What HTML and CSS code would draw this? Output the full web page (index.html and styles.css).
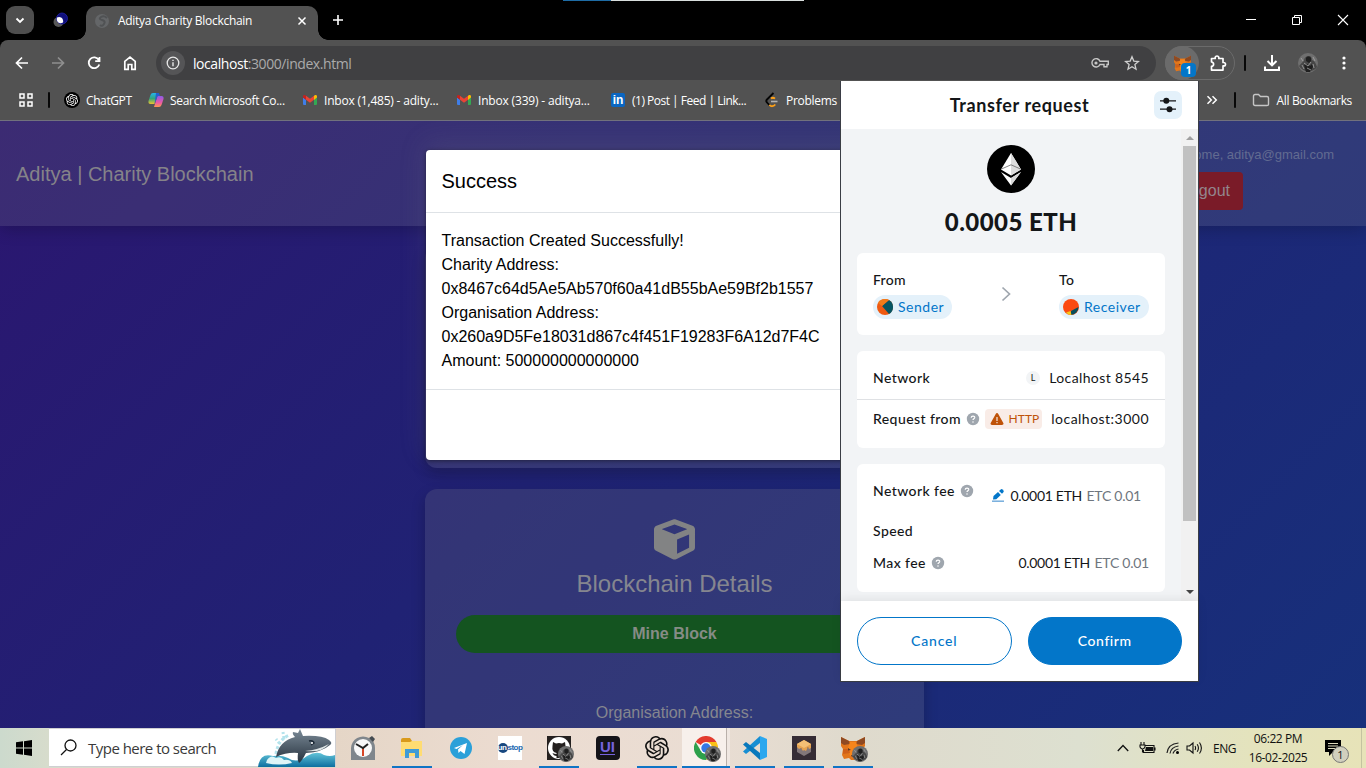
FILE: index.html
```html
<!DOCTYPE html>
<html lang="en">
<head>
<meta charset="utf-8">
<title>Aditya Charity Blockchain</title>
<link rel="stylesheet" href="styles.css">
</head>
<body>
<svg class="defs" width="0" height="0">
  <defs>
    <symbol id="openai" viewBox="0 0 24 24"><path fill="currentColor" d="M22.2819 9.8211a5.9847 5.9847 0 0 0-.5157-4.9108 6.0462 6.0462 0 0 0-6.5098-2.9A6.0651 6.0651 0 0 0 4.9807 4.1818a5.9847 5.9847 0 0 0-3.9977 2.9 6.0462 6.0462 0 0 0 .7427 7.0966 5.98 5.98 0 0 0 .511 4.9107 6.051 6.051 0 0 0 6.5146 2.9001A5.9847 5.9847 0 0 0 13.2599 24a6.0557 6.0557 0 0 0 5.7718-4.2058 5.9894 5.9894 0 0 0 3.9977-2.9001 6.0557 6.0557 0 0 0-.7475-7.0729zm-9.022 12.6081a4.4755 4.4755 0 0 1-2.8764-1.0408l.1419-.0804 4.7783-2.7582a.7948.7948 0 0 0 .3927-.6813v-6.7369l2.02 1.1686a.071.071 0 0 1 .038.052v5.5826a4.504 4.504 0 0 1-4.4945 4.4944zm-9.6607-4.1254a4.4708 4.4708 0 0 1-.5346-3.0137l.142.0852 4.783 2.7582a.7712.7712 0 0 0 .7806 0l5.8428-3.3685v2.3324a.0804.0804 0 0 1-.0332.0615L9.74 19.9502a4.4992 4.4992 0 0 1-6.1408-1.6464zM2.3408 7.8956a4.485 4.485 0 0 1 2.3655-1.9728V11.6a.7664.7664 0 0 0 .3879.6765l5.8144 3.3543-2.0201 1.1685a.0757.0757 0 0 1-.071 0l-4.8303-2.7865A4.504 4.504 0 0 1 2.3408 7.872zm16.5963 3.8558L13.1038 8.364 15.1192 7.2a.0757.0757 0 0 1 .071 0l4.8303 2.7913a4.4944 4.4944 0 0 1-.6765 8.1042v-5.6772a.79.79 0 0 0-.407-.667zm2.0107-3.0231l-.142-.0852-4.7735-2.7818a.7759.7759 0 0 0-.7854 0L9.409 9.2297V6.8974a.0662.0662 0 0 1 .0284-.0615l4.8303-2.7866a4.4992 4.4992 0 0 1 6.6802 4.66zM8.3065 12.863l-2.02-1.1638a.0804.0804 0 0 1-.038-.0567V6.0742a4.4992 4.4992 0 0 1 7.3757-3.4537l-.142.0805L8.704 5.459a.7948.7948 0 0 0-.3927.6813zm1.0976-2.3654l2.602-1.4998 2.6069 1.4998v2.9994l-2.5974 1.4997-2.6067-1.4997Z"/></symbol>
    <symbol id="gmail" viewBox="0 0 16 16"><path fill="#3f7ee8" d="M1 5.500l3 2.300V13H2a1 1 0 0 1-1-1z"/><path fill="#34a853" d="M12 7.800l3-2.300V12a1 1 0 0 1-1 1h-2z"/><path fill="#fbbc04" d="M12 3.800l.8-.6c1-.7 2.200 0 2.200 1.100v1.300l-3 2.300z"/><path fill="#c5221f" d="M1 4.300c0-1.100 1.300-1.800 2.200-1.100l.8.6v4L1 5.500z"/><path fill="#ea4335" d="M4 3.800l4 3 4-3v4l-4 3-4-3z"/></symbol>
    <symbol id="fox" viewBox="0 0 24 24"><path fill="#e2761b" d="M0 1l8 4h8l8-4v9l-2 3 1 6-2 4-5-1-2 2h-4l-2-2-5 1-2-4 1-6-2-3z"/><path fill="#8f4a22" d="M0 1l8 4 1 3-6 1-3-2zM24 1l-8 4-1 3 6 1 3-2z"/><path fill="#f6851b" d="M9 6h6l2 6-2 8H9l-2-8z"/><path fill="#cf611a" d="M2 13l6 0 1 4-7 1zM22 13l-6 0-1 4 7 1z"/><path fill="#5b3b28" d="M7 12l3 2-3 .5zM17 12l-3 2 3 .5zM10 19h4l-1 2h-2z"/></symbol>
    <symbol id="avatar" viewBox="0 0 20 20"><circle cx="10" cy="10" r="10" fill="#6f6f6f"/><path fill="#474747" d="M1 13c2-2 3-4 5-5 0-3 2-5 5-5 2 0 3 2 3 4 3 1 4 4 5 7-4 6-14 6-18-1z"/><path fill="#1f1f1f" d="M8 5c1-2 4-2 5 0v3l-2 2-3-2zM6 12l3-1 3 2 2-2 1 3-3 5H8z"/><path stroke="#a8a8a8" stroke-width=".8" fill="none" d="M6 10l4 3 3-4M9 15l4 2M3 5l2 3M15 4l2 4M4 12l2 4M15 11l1 4"/></symbol>
    <symbol id="help" viewBox="0 0 14 14"><circle cx="7" cy="7" r="6.200" fill="#9fa6ae"/><path d="M5.200 5.700c.1-2.200 3.800-2 3.500 0C8.500 6.800 7 6.700 7 8.100" fill="none" stroke="#fff" stroke-width="1.200"/><circle cx="7" cy="10" r=".75" fill="#fff"/></symbol>
  </defs>
</svg>

<div class="screen">
  <header class="tabstrip">
    <span class="tab-search"><svg width="28" height="28" viewBox="0 0 28 28"><path d="M10.500 12.500l3.500 3.500 3.500-3.500" fill="none" stroke="#fff" stroke-width="1.800"/></svg></span>
    <svg class="pinned" width="16" height="16" viewBox="0 0 16 16"><circle cx="5.500" cy="10" r="5" fill="#585858"/><circle cx="9" cy="6.500" r="5.500" fill="#10107c" stroke="#2222a8" stroke-width=".8"/><path d="M4 5.500c4-2 7 2 6 5-4 2-7-1-6-5z" fill="#fff"/></svg>
    <div class="tab">
      <svg width="16" height="16" viewBox="0 0 16 16"><circle cx="8" cy="8" r="7" fill="#646668"/><path d="M13 5q-3-3-6-1t1 3 2 4-4 1" fill="none" stroke="#505254" stroke-width="2"/></svg>
      <span class="tab-title">Aditya Charity Blockchain</span>
      <svg class="tab-close" width="10" height="10" viewBox="0 0 10 10"><path d="M1.500 1.500l7 7m0-7l-7 7" stroke="#fff" stroke-width="1.500"/></svg>
    </div>
    <svg class="new-tab" width="12" height="12" viewBox="0 0 12 12"><path d="M6 1v10M1 6h10" stroke="#fff" stroke-width="1.600"/></svg>
    <div class="share-line"><i></i></div>
    <div class="win-controls">
      <svg width="12" height="12" viewBox="0 0 12 12"><path d="M1 5.500h10" stroke="#fff"/></svg>
      <svg width="12" height="12" viewBox="0 0 12 12"><path d="M1.500 3.500h7v7h-7zM3.500 3.500v-2h7v7h-2" fill="none" stroke="#fff"/></svg>
      <svg width="12" height="12" viewBox="0 0 12 12"><path d="M1 1l10 10M11 1L1 11" stroke="#fff" stroke-width="1.100"/></svg>
    </div>
  </header>

  <div class="toolbar">
    <div class="nav">
      <svg width="16" height="16" viewBox="0 0 16 16"><path d="M14 8H3M8 2.500L2.500 8 8 13.500" fill="none" stroke="#fff" stroke-width="1.700"/></svg>
      <svg width="16" height="16" viewBox="0 0 16 16"><path d="M2 8h11M8 2.500L13.500 8 8 13.500" fill="none" stroke="#8f8f8f" stroke-width="1.700"/></svg>
      <svg width="16" height="16" viewBox="0 0 16 16"><path d="M12.800 5A5.400 5.400 0 1 0 13.300 9.500M13.500 2v4.200H9.200" fill="none" stroke="#fff" stroke-width="1.800"/></svg>
      <svg width="16" height="16" viewBox="0 0 16 16"><path d="M2.800 6.300L8 2.200l5.200 4.100v8H9.800V9.500H6.200v4.800H2.800z" fill="none" stroke="#fff" stroke-width="1.700"/></svg>
    </div>
    <div class="omnibox">
      <span class="site-info"><svg width="14" height="14" viewBox="0 0 14 14"><circle cx="7" cy="7" r="5.800" fill="none" stroke="#e8e8e8" stroke-width="1.300"/><path d="M7 6.200v4M7 3.700V5" stroke="#e8e8e8" stroke-width="1.400"/></svg></span>
      <span class="url"><b>localhost</b>:3000/index.html</span>
      <svg class="key" width="20" height="12" viewBox="0 0 20 12"><path d="M10 4.200h8.300v3.300h-1.300v2.300h-3V7.500h-4a4.200 4.200 0 1 1 0-3.300z" fill="none" stroke="#c7c7c7" stroke-width="1.400"/><circle cx="6" cy="6" r="1.600" fill="#c7c7c7"/></svg>
      <svg width="16" height="16" viewBox="0 0 16 16"><path d="M8 1.800l1.800 4.300 4.700.4-3.600 3.100 1.100 4.600L8 11.700l-4 2.500 1.100-4.600-3.600-3.100 4.700-.4z" fill="none" stroke="#d0d0d0" stroke-width="1.300"/></svg>
    </div>
    <div class="ext-pill">
      <span class="ext-fox"><svg width="17" height="17"><use href="#fox"/></svg><b class="ext-badge">1</b></span>
      <svg width="18" height="18" viewBox="0 0 18 18"><path d="M2.500 4.500h3.700V3.300a1.900 1.900 0 0 1 3.600 0v1.200h4.200v4h.8a1.700 1.700 0 0 1 0 3.400H14v4.200H2.500v-3.800c2.800-.3 2.800-4 0-4.300z" fill="none" stroke="#fff" stroke-width="1.700" stroke-linejoin="round"/></svg>
    </div>
    <i class="bar bar-top"></i>
    <svg class="download" width="18" height="18" viewBox="0 0 18 18"><path d="M9 1v10M4.500 7L9 11.300 13.500 7M2 12.500V16h14v-3.500" fill="none" stroke="#fff" stroke-width="2"/></svg>
    <svg class="profile" width="20" height="20"><use href="#avatar"/></svg>
    <svg width="4" height="16" viewBox="0 0 4 16"><g fill="#fff"><circle cx="2" cy="3" r="1.600"/><circle cx="2" cy="8" r="1.600"/><circle cx="2" cy="13" r="1.600"/></g></svg>
  </div>

  <nav class="bookmarks">
    <svg width="16" height="16" viewBox="0 0 16 16"><path d="M2 2h4v4H2zM10 2h4v4h-4zM2 10h4v4H2zM10 10h4v4h-4z" fill="none" stroke="#fff" stroke-width="1.500"/></svg>
    <i class="bar"></i>
    <span class="bm bm-gpt"><i class="gpt-disc"><svg width="12" height="12"><use href="#openai"/></svg></i><span>ChatGPT</span></span>
    <span class="bm bm-cop"><svg width="16" height="16" viewBox="0 0 16 16"><defs><linearGradient id="ca" x2="0" y2="1"><stop stop-color="#25b4ef"/><stop offset=".5" stop-color="#32a77c"/><stop offset="1" stop-color="#ebc32e"/></linearGradient><linearGradient id="cb" x2="0" y2="1"><stop stop-color="#8d5be8"/><stop offset=".6" stop-color="#ec5aa4"/><stop offset="1" stop-color="#ff9650"/></linearGradient></defs><path d="M5 1h5L6.500 12H2.500Q0 12 .5 9L2.500 3Q3 1 5 1z" fill="url(#ca)"/><path d="M9.500 4h4q2.500 0 2 3l-2 6q-.7 2-2.500 2H6z" fill="url(#cb)"/><path d="M8 1h3l1 3H9.500L6.500 12z" fill="#245fcf"/></svg><span>Search Microsoft Co...</span></span>
    <span class="bm bm-in1"><svg width="16" height="16"><use href="#gmail"/></svg><span>Inbox (1,485) - adity...</span></span>
    <span class="bm bm-in2"><svg width="16" height="16"><use href="#gmail"/></svg><span>Inbox (339) - aditya...</span></span>
    <span class="bm bm-li"><i class="linkedin">in</i><span>(1) Post | Feed | Link...</span></span>
    <span class="bm bm-lc"><svg width="16" height="16" viewBox="0 0 16 16"><path d="M9.500 1L3 7.500q-1.500 1.500 0 3l2.500 2.700" fill="none" stroke="#050505" stroke-width="1.800"/><path d="M7 6.500q2-1.700 4 .2M5.300 12.800q3 3 6-.3" fill="none" stroke="#ffa116" stroke-width="1.800"/><path d="M7 9.500h6.500" stroke="#b3b3b3" stroke-width="1.600"/></svg><span>Problems</span></span>
    <div class="bm-end">
      <svg width="12" height="10" viewBox="0 0 12 10"><path d="M1.500 1.200L5.300 5 1.500 8.800M6.500 1.200L10.300 5 6.500 8.800" fill="none" stroke="#fff" stroke-width="1.500"/></svg>
      <i class="bar"></i>
      <svg width="18" height="14" viewBox="0 0 18 14"><path d="M1.500 3Q1.500 1.500 3 1.500h3.500l2 2H15q1.500 0 1.500 1.500v6.500q0 1-1.500 1H3q-1.500 0-1.500-1.500z" fill="none" stroke="#c5c5c5" stroke-width="1.400"/></svg>
      <span class="bm-all">All Bookmarks</span>
    </div>
  </nav>

  <main class="page">
    <div class="site-header">
      <span class="brand">Aditya | Charity Blockchain</span>
      <div class="account">
        <span class="welcome">Welcome, aditya@gmail.com</span>
        <span class="logout">Logout</span>
      </div>
    </div>
    <div class="column">
      <section class="card card-prev"></section>
      <section class="card card-chain">
        <svg class="cube" width="41" height="41" viewBox="0 0 512 512"><path fill="#828384" d="M239.100 6.300l-208 78c-18.700 7-31.100 25-31.100 45v225.100c0 18.200 10.300 34.800 26.500 42.900l208 104c13.500 6.800 29.400 6.800 42.900 0l208-104c16.300-8.100 26.500-24.800 26.500-42.900V129.300c0-20-12.400-37.900-31.100-44.900l-208-78C262 2.200 250 2.200 239.100 6.300zM256 68.400l156 58v1.100l-156 64-156-64v-1.100l156-58zm32 364V255.500l150-62v165.900l-150 73z"/></svg>
        <h2>Blockchain Details</h2>
        <div class="mine">Mine Block</div>
        <p>Organisation Address:</p>
      </section>
    </div>
    <div class="modal">
      <div class="modal-head">Success</div>
      <div class="modal-body">Transaction Created Successfully!<br>Charity Address:<br>0x8467c64d5Ae5Ab570f60a41dB55bAe59Bf2b1557<br>Organisation Address:<br>0x260a9D5Fe18031d867c4f451F19283F6A12d7F4C<br>Amount: 500000000000000</div>
    </div>
  </main>

  <footer class="taskbar">
    <span class="start"><svg width="16" height="16" viewBox="0 0 16 16"><path d="M0 2.300l7-1v6.200H0zM8 1.200L16 0v7.500H8zM0 8.500h7v6.200l-7-1zM8 8.500h8V16l-8-1.200z"/></svg></span>
    <div class="search">
      <svg width="17" height="17" viewBox="0 0 17 17"><circle cx="10.500" cy="6.500" r="5.500" fill="none" stroke="#111" stroke-width="1.300"/><path d="M6.500 10.500L1 16" stroke="#111" stroke-width="1.300"/></svg>
      <span>Type here to search</span>
      <svg class="whale" width="77" height="38" viewBox="0 0 77 38"><defs><linearGradient id="sea" x2="0" y2="1"><stop stop-color="#62c4d8"/><stop offset="1" stop-color="#0d6fa0"/></linearGradient><linearGradient id="wh" x2="0" y2="1"><stop stop-color="#7b8b98"/><stop offset="1" stop-color="#27323e"/></linearGradient></defs><path d="M18 25Q20 10 32 6M22 15l-4-5M26 10l-1-7" fill="none" stroke="#b4e3ec" stroke-width="3" stroke-dasharray="3 2"/><path d="M0 38Q2 23 15 27q9-1 15 2 9 6 19-2 10-6 17-1 6 2 11 0v12z" fill="url(#sea)"/><path d="M9 31q4-6 9-2 5-2 8 2 6-1 8 3-13 3-26 0z" fill="#def5f7"/><path d="M18 28Q21 12 37 8Q34 5 35 3l5 1 2-4 3 7q19-1 26 4 4 3 1 5Q64 23 48 24q-4 8-7 10-2-3-1-10-11-1-22 4z" fill="url(#wh)"/><path d="M47 22q13-1 24-7-7 9-24 7z" fill="#e0e6e6"/><path d="M51 12q4-1 5 2l-3 2" fill="none" stroke="#1b2835" stroke-width="1.500"/><circle cx="54" cy="14" r="1" fill="#fff"/></svg>
    </div>
    <div class="apps">
      <span class="app"><svg width="24" height="24" viewBox="0 0 24 24"><path d="M0 12A12 12 0 0 1 18 2q6 3 6 10v12H0z" fill="#7f868c"/><path d="M18 2l3-2 3 3-2 3z" fill="#444b51"/><circle cx="12" cy="12" r="9" fill="#f8f8f8"/><path d="M12 12v8" stroke="#d64525" stroke-width="2"/><path d="M5 8l7 4 5-4" fill="none" stroke="#222" stroke-width="2"/></svg></span>
      <span class="app open"><svg width="22" height="20" viewBox="0 0 22 20"><path d="M0 2q0-2 2-2h7l2 3h9v5H0z" fill="#d99a1b"/><path d="M0 4h9l2-1h10v15H0z" fill="#ffdc72"/><path d="M4 20v-9h14v9h-4v-5H8v5z" fill="#3f9bd7"/></svg></span>
      <span class="app"><svg width="22" height="22" viewBox="0 0 22 22"><circle cx="11" cy="11" r="11" fill="#2aa0d9"/><path d="M4 11l13-5-2.500 11-4-3-2 2-.5-3.500 5-4.500-6.500 4z" fill="#fff"/></svg></span>
      <span class="app"><i class="unstop"><b>un</b>stop</i></span>
      <span class="app open"><i class="stack"><svg width="24" height="24" viewBox="0 0 24 24"><path fill="#24201f" d="M0 0h24v24H0z"/><circle cx="12" cy="12" r="11" fill="#fff"/><path fill="#24201f" d="M6 6l3 1.500q3-1 6 0L18 6l.5 4q1 6-5 7v5h-4v-2q-3 0-4-3 2 1 4 1v-1q-5-1-4-7z"/></svg><svg class="mini" width="16" height="16"><use href="#avatar"/></svg></i></span>
      <span class="app"><i class="ui-app">UI</i></span>
      <span class="app open"><svg width="24" height="24"><use href="#openai"/></svg></span>
      <span class="app open active"><i class="stack"><svg width="24" height="24" viewBox="0 0 24 24"><path d="M12 12L1.600 6A12 12 0 0 1 22.400 6z" fill="#e33b2e"/><path d="M12 6H22.400A12 12 0 0 1 12 24l5-9z" fill="#fbc116"/><path d="M12 24A12 12 0 0 1 1.600 6L7 15l10 0z" fill="#2da04b"/><circle cx="12" cy="12" r="6" fill="#fff"/><circle cx="12" cy="12" r="4.700" fill="#3578e5"/></svg><svg class="mini" width="16" height="16"><use href="#avatar"/></svg></i></span>
      <span class="app open"><svg width="24" height="24" viewBox="0 0 24 24"><path d="M17 0l7 3v18l-7 3z" fill="#2ba7ef"/><path d="M17 0v7L3 18l-3-2.500z" fill="#168ed3"/><path d="M17 24v-7L3 6 0 8.500z" fill="#0878bc"/></svg></span>
      <span class="app open"><svg width="24" height="24" viewBox="0 0 24 24"><path fill="#352c35" d="M0 0h24v24H0z"/><path fill="#82777a" d="M5 10l7 4 7-4v6l-7 4-7-4z"/><path fill="#e6a351" d="M5 8l7-4 7 4v4l-2 1-1-2-2 4-2-1-1 1-2-3-2 1-2-2z"/><path fill="#f4bf75" d="M5 8l7-4 7 4-7 4z"/></svg></span>
      <span class="app open"><i class="stack"><svg width="24" height="24"><use href="#fox"/></svg><svg class="mini" width="16" height="16"><use href="#avatar"/></svg></i></span>
    </div>
    <div class="tray">
      <svg width="12" height="8" viewBox="0 0 12 8"><path d="M.8 7L6 1.500 11.200 7" fill="none" stroke="#111" stroke-width="1.300"/></svg>
      <svg class="t-bat" width="17" height="13" viewBox="0 0 17 13"><path d="M6 3.500h9v7H4.500V8M16 5.500v3M2 0v3M5 0v3M1 3h5v2q-1 2-2.500 2T1 5zM3.500 7v3H5" fill="none" stroke="#111" stroke-width="1.100"/><path d="M7 5h7v4H6z" fill="#111"/></svg>
      <svg class="t-wifi" width="14" height="14" viewBox="0 0 14 14"><g fill="none" stroke="#222" stroke-width="1.200"><path d="M1 12Q2 3 12.500 2"/><path d="M4 12.500Q5 6 12.500 5"/><path d="M7 12.500Q8 9 12.500 8"/></g><circle cx="11.500" cy="11.500" r="1.500"/></svg>
      <svg class="t-vol" width="17" height="14" viewBox="0 0 17 14"><path d="M1 5h2.500L7 2v10L3.500 9H1zM9 5q1.200 2 0 4M11.200 3.200q2.500 3.800 0 7.600M13.500 1.500q3.800 5.500 0 11" fill="none" stroke="#111" stroke-width="1.100"/></svg>
      <span class="lang">ENG</span>
      <span class="clock"><span>06:22 PM</span><span>16-02-2025</span></span>
      <i class="notice"><svg width="16" height="16" viewBox="0 0 16 16"><path d="M0 0h16v12H8l-4 4v-4H0z"/><path d="M3 3.500h10M3 6h10M3 8.500h7" stroke="#ddd9bc"/></svg><b>1</b></i>
    </div>
  </footer>

  <aside class="popup">
    <div class="pop-head"><span>Transfer request</span>
      <i class="adv"><svg width="18" height="16" viewBox="0 0 18 16"><path d="M1 3.800h16M1 12.200h16" stroke="#141618" stroke-width="1.200"/><circle cx="7.300" cy="3.800" r="3" fill="#141618"/><circle cx="10.500" cy="12.200" r="3" fill="#141618"/></svg></i>
    </div>
    <div class="pop-main">
      <div class="pop-content">
        <svg class="eth" width="48" height="48" viewBox="0 0 48 48"><circle cx="24" cy="24" r="24"/><path d="M24 8l10 16.500-10 6-10-6z" fill="#fff"/><path d="M24 8v22.500l10-6z" fill="#ddd"/><path d="M14.500 24L24 19.800l9.500 4.200" fill="none" stroke="#666" stroke-width=".8"/><path d="M14 27l10 6 10-6-10 13.500z" fill="#fff"/><path d="M24 33l10-6-10 13.500z" fill="#d8d8d8"/></svg>
        <div class="amount">0.0005 ETH</div>
        <div class="box transfer">
          <div><span class="lbl">From</span><span class="chip"><svg width="16" height="16" viewBox="0 0 16 16"><circle cx="8" cy="8" r="8" fill="#ef5a12"/><path d="M5 7L12 1.100A8 8 0 0 1 12 15z" fill="#075563"/><path d="M1 4A8 8 0 0 1 12 1.100L5 7z" fill="#f17b1a"/></svg><span>Sender</span></span></div>
          <svg class="arrow" width="10" height="16" viewBox="0 0 10 16"><path d="M1.500 1.500L8.500 8l-7 6.500" fill="none" stroke="#9fa6ae" stroke-width="1.700"/></svg>
          <div class="to"><span class="lbl">To</span><span class="chip"><svg width="16" height="16" viewBox="0 0 16 16"><circle cx="8" cy="8" r="8" fill="#fb4a12"/><path d="M15.500 8A8 8 0 0 1 8 16l0-4z" fill="#074f5c"/><path d="M3 13.500Q5 16 8.500 16L7.500 12z" fill="#f4c91b"/></svg><span>Receiver</span></span></div>
        </div>
        <div class="box site">
          <div class="row row-net"><span>Network</span><span class="val"><i class="net-l">L</i><span class="t-local">Localhost 8545</span></span></div>
          <div class="row row-req"><span>Request from</span><svg class="q" width="14" height="14"><use href="#help"/></svg><span class="http"><svg width="14" height="14" viewBox="0 0 14 14"><path d="M7 1q.8 0 1.300.9l5 9q.8 2-1.300 2.100H2Q0 12.900.7 10.900l5-9Q6.200 1 7 1z" fill="#bf5208"/><path d="M7 5v4M7 10v1.200" stroke="#f8e8e0" stroke-width="1.200"/></svg><span>HTTP</span></span><span class="val t-host">localhost:3000</span></div>
        </div>
        <div class="box fees">
          <div class="row row-fee"><span>Network fee</span><svg class="q" width="14" height="14"><use href="#help"/></svg><span class="val shifted"><svg width="12" height="14" viewBox="0 0 12 14"><path d="M1 11.500l.5-3.500L6 4l2.800 3-4.500 4.200zM7 3l2.300-2q2.500.2 2.500 2.800L10 5.800z" fill="#0376c9"/><path d="M0 13.200h12" stroke="#75addd" stroke-width="1.500"/></svg><span class="eth-v">0.0001 ETH</span><em>ETC 0.01</em></span></div>
          <div class="row row-speed"><span>Speed</span></div>
          <div class="row row-max"><span>Max fee</span><svg class="q" width="14" height="14"><use href="#help"/></svg><span class="val"><span class="eth-v">0.0001 ETH</span><em>ETC 0.01</em></span></div>
        </div>
      </div>
      <div class="scroll"><i class="up"></i><i class="thumb"></i><i class="down"></i></div>
    </div>
    <div class="pop-foot"><span class="btn">Cancel</span><span class="btn primary">Confirm</span></div>
  </aside>
</div>
</body>
</html>
```
FILE: styles.css
```css
* { box-sizing: border-box; }
body { margin: 0; background: #000; }
svg { display: block; flex: none; }
i, em { font-style: normal; }
.defs { position: absolute; }
.screen { position: relative; width: 1366px; height: 768px; overflow: hidden; display: flex; flex-direction: column; font-family: "Open Sans", "Noto Sans", sans-serif; }

/* tab strip */
.tabstrip { position: relative; height: 40px; flex: none; display: flex; background: #000; padding-left: 6px; }
.tab-search { width: 28px; height: 28px; margin-top: 6px; border-radius: 9px; background: #4e4e4e; }
.pinned { margin: 12px 0 0 19px; }
.tab { position: relative; display: flex; align-items: center; width: 232px; height: 34px; margin: 6px 0 0 17px; padding: 0 11px 5px 8px; background: #525252; border-radius: 10px 10px 0 0; color: #fff; font-size: 12px; }
.tab::before, .tab::after { content: ""; position: absolute; bottom: 0; width: 10px; height: 10px; }
.tab::before { left: -10px; background: radial-gradient(circle at 0 0, transparent 9.5px, #525252 10px); }
.tab::after { right: -10px; background: radial-gradient(circle at 100% 0, transparent 9.5px, #525252 10px); }
.tab-title { margin-left: 8px; letter-spacing: -.28px; white-space: nowrap; }
.tab-close { margin-left: auto; }
.new-tab { margin: 14px 0 0 14px; }
.share-line { position: absolute; left: 563px; top: 0; width: 241px; height: 1px; background: #d8dedd; }
.share-line i { display: block; width: 48px; height: 1px; background: #1e6ca5; }
.win-controls { display: flex; gap: 34px; margin: 14px 17px 0 auto; }

/* toolbar */
.toolbar { height: 46px; flex: none; display: flex; align-items: center; background: #525252; padding-right: 20px; border-radius: 8px 8px 0 0; }
.nav { display: flex; gap: 20px; padding-left: 14px; width: 156px; flex: none; }
.omnibox { display: flex; align-items: center; width: 1000px; height: 34px; border-radius: 17px; background: #404042; padding: 0 16px 0 5px; color: #ababab; font-size: 14px; flex: none; }
.site-info { width: 24px; height: 24px; border-radius: 50%; background: #555557; display: grid; place-items: center; }
.url { margin-left: 8px; letter-spacing: -.43px; }
.url b { color: #fff; font-weight: 400; }
.key { margin: 0 14px 0 auto; }
.ext-pill { display: flex; align-items: center; gap: 10px; width: 70px; height: 34px; margin-left: 9px; border: 1px solid #6b6b6b; border-radius: 17px; flex: none; }
.ext-fox { position: relative; display: grid; place-items: center; width: 34px; height: 34px; border-radius: 50%; background: #6b6b6b; margin-left: -1px; }
.ext-badge { position: absolute; left: 16px; top: 17px; width: 15px; height: 14px; border-radius: 4px; background: #0376c9; color: #fff; font-size: 10px; line-height: 14px; text-align: center; }
.bar { width: 2px; height: 16px; background: #080808; border-radius: 1px; flex: none; }
.bar-top { margin-left: 9px; }
.download { margin-left: 17px; }
.profile { margin: 0 24px 0 17px; }

/* bookmarks */
.bookmarks { height: 34px; flex: none; display: flex; align-items: center; background: #525252; padding: 0 14px 6px 18px; color: #fff; font-size: 12px; white-space: nowrap; }
.bookmarks > .bar { margin: 0 14px; }
.bm { display: flex; align-items: center; gap: 6px; flex: none; width: 154px; letter-spacing: -.3px; }
.bm-gpt { width: 84px; letter-spacing: -.4px; }
.bm-in1 { letter-spacing: -.2px; }
.bm-in2 { letter-spacing: -.18px; }
.bm-li { letter-spacing: -.5px; }
.gpt-disc { display: grid; place-items: center; width: 16px; height: 16px; border-radius: 50%; background: #000; color: #fff; }
.linkedin { width: 14px; height: 14px; margin: 0 1px; border-radius: 2px; background: #0a66c2; font: bold 12px/14px "Liberation Sans", sans-serif; text-align: center; letter-spacing: 0; }
.bm-end { display: flex; align-items: center; margin-left: auto; }
.bm-end .bar { margin: 0 16px; }
.bm-all { margin-left: 7px; letter-spacing: -.35px; }

/* web page */
.page { position: relative; flex: 1; overflow: hidden; border-top: 1px solid #71717d; background: linear-gradient(135deg, #2b1670 0%, #202274 45%, #17307b 100%); font-family: "Liberation Sans", Arial, sans-serif; }
.site-header { height: 105px; display: flex; justify-content: space-between; align-items: center; padding: 0 32px 0 16px; background: rgba(128,128,128,.2); box-shadow: 0 4px 15px rgba(0,0,0,.2); color: #858389; }
.brand { font-size: 20px; padding-top: 2px; }
.account { display: flex; flex-direction: column; gap: 8px; width: 168px; margin-top: 17px; margin-bottom: 8px; }
.welcome { display: flex; justify-content: flex-end; white-space: nowrap; font-size: 13px; line-height: 18px; color: #626b91; }
.logout { width: 77px; height: 38px; border-radius: 4px; background: #7a1b28; color: #93858c; font-size: 16px; line-height: 37px; text-align: center; padding-left: 2px; }
.column { width: 499px; margin-left: 425px; }
.card { background: rgba(128,128,128,.2); border-radius: 12px; box-shadow: 0 6px 14px rgba(0,0,0,.22); }
.card-prev { height: 222px; margin-top: 20px; }
.card-chain { height: 360px; margin-top: 21px; padding: 30px 31px; display: flex; flex-direction: column; align-items: center; color: #85868f; }
.card-chain h2 { margin: 10px 0 17px; font-size: 24px; line-height: 28px; font-weight: 400; }
.mine { width: 100%; height: 38px; border-radius: 19px; background: #145420; color: #868c86; font-weight: bold; font-size: 16px; line-height: 37px; text-align: center; flex: none; }
.card-chain p { margin: 50px 0 0; font-size: 16px; line-height: 20px; }
.modal { position: absolute; left: 426px; top: 29px; width: 498px; height: 310px; border-radius: 4px; background: #fff; color: #000; box-shadow: 0 -6px 26px 2px rgba(128,128,128,.16), 0 1px 4px rgba(0,0,0,.5); }
.modal-head { height: 63px; padding: 0 15.5px; border-bottom: 1px solid #dee2e6; font-size: 20px; line-height: 62px; }
.modal-body { height: 177px; padding: 16px 15.5px; border-bottom: 1px solid #dee2e6; font-size: 16px; line-height: 24px; white-space: nowrap; }

/* wallet popup */
.popup { position: absolute; left: 840px; top: 81px; width: 359px; height: 601px; display: flex; flex-direction: column; border: 1px solid #3a3d45; border-top: 0; background: #fff; font-family: Lato, sans-serif; color: #141618; font-size: 14px; font-weight: 500; }
.pop-head { position: relative; height: 48px; flex: none; font-size: 18px; line-height: 48px; font-weight: 700; text-align: center; letter-spacing: .6px; }
.adv { position: absolute; right: 16px; top: 10px; width: 28px; height: 28px; border-radius: 7px; background: #e4f1fa; display: grid; place-items: center; }
.pop-main { height: 472px; flex: none; display: flex; overflow: hidden; background: #f2f4f6; }
.pop-content { width: 340px; flex: none; padding: 16px; }
.eth { margin: 0 auto; }
.amount { height: 60px; font-size: 24px; line-height: 58px; font-weight: 900; text-align: center; letter-spacing: .45px; }
.box { background: #fff; border-radius: 6px; padding: 0 16px; margin-bottom: 16px; }
.transfer { height: 82px; padding-top: 16px; display: flex; justify-content: space-between; }
.transfer > div { display: flex; flex-direction: column; align-items: flex-start; }
.transfer > .to { width: 90px; }
.lbl { line-height: 22px; margin-bottom: 4px; letter-spacing: .3px; }
.chip { display: flex; align-items: center; gap: 5px; height: 24px; padding: 0 8px 0 4px; border-radius: 12px; background: #e4f1fa; color: #0376c9; white-space: nowrap; font-weight: 400; line-height: 24px; letter-spacing: .52px; }
.arrow { margin: 17px 0 0; }
.site { height: 97px; }
.row { display: flex; align-items: center; white-space: nowrap; letter-spacing: .42px; }
.q { margin: 1px 0 0 5px; }
.val { margin-left: auto; display: flex; align-items: center; gap: 6px; font-weight: 400; }
.row-net { height: 49px; margin: 0 -16px; padding: 5px 16px 0; border-bottom: 1px solid #dfe1e4; }
.net-l { width: 14px; height: 14px; border-radius: 50%; background: #f2f4f6; font-size: 9px; line-height: 14px; text-align: center; margin-right: 3px; }
.row-req { height: 37px; }
.http { display: flex; align-items: center; gap: 4px; width: 57px; height: 20px; margin-left: 5.5px; padding: 0 4px 0 5px; border-radius: 4px; background: #f9ece7; color: #bf5208; font-size: 12px; font-weight: 400; letter-spacing: .1px; }
.fees { height: 128px; padding-top: 14px; margin-bottom: 0; }
.row-fee { height: 24px; }
.shifted { position: relative; left: -8px; top: 5px; }
.row-speed { height: 56px; }
.row-max { height: 8px; }
.val em { color: #6f767e; margin-left: -1.5px; letter-spacing: -.25px; }
.eth-v { letter-spacing: -.3px; }
.t-local { letter-spacing: .38px; }
.t-host { letter-spacing: .48px; }
.scroll { width: 17px; flex: none; display: flex; flex-direction: column; align-items: center; background: #f1f1f1; padding: 7px 0 7px 0; }
.up, .down { border: 4px solid transparent; border-top: 0; border-bottom: 4px solid #a0a0a0; }
.thumb { width: 13px; height: 375px; margin: 6px 0 auto; background: #c1c1c1; }
.down { border-top: 4px solid #444; border-bottom: 0; }
.pop-foot { flex: 1; display: flex; gap: 16px; padding: 16px; box-shadow: 0 -2px 10px rgba(0,0,0,.08); position: relative; background: #fff; }
.btn { flex: 1; height: 48px; border: 1px solid #0376c9; border-radius: 24px; color: #0376c9; font-size: 14px; line-height: 46px; text-align: center; letter-spacing: .8px; }
.primary { background: #0376c9; color: #fff; letter-spacing: .55px; }

/* taskbar */
.taskbar { height: 40px; flex: none; display: flex; background: linear-gradient(90deg, #ccdacd 0, #d7dccc 49px, #e5d6c7 336px, #ecdcd1 520px, #eaddd3 700px, #dfdacd 850px, #dde0d0 1080px, #e4e3bd 1250px, #e7e3b8 1366px); color: #111; }
.start { width: 49px; display: grid; place-items: center; }
.start svg { margin-right: 1px; }
.search { width: 287px; height: 39px; background: #fff; border: 1px solid #cfcfd2; border-left-width: 0; display: flex; align-items: center; padding-left: 11px; font-size: 15px; color: #3a3a3a; white-space: nowrap; }
.search span { margin-left: 11px; letter-spacing: -.52px; width: 140px; }
.whale { margin: 0 0 0 32px; }
.apps { display: flex; margin-left: 2px; }
.app { position: relative; width: 49px; height: 40px; display: grid; place-items: center; }
.open::after { content: ""; position: absolute; left: 5px; right: 4px; bottom: 0; height: 2px; background: #1074c5; }
.active { background: linear-gradient(90deg, #f7f0eb 44px, #b9b0aa 44px, #b9b0aa 45px, #efe7e1 45px) 1px 0 / 48px 40px no-repeat; }
.active::after { left: 1px; right: 0; }
.stack { position: relative; display: block; }
.mini { position: absolute; left: 11px; top: 10px; }
.unstop { width: 24px; height: 24px; background: #fff; color: #2168b1; display: flex; align-items: center; font: bold 8px/12px "Liberation Sans", sans-serif; letter-spacing: -.5px; }
.unstop b { width: 10px; height: 10px; flex: none; border-radius: 5px; background: #17477f; color: #fff; line-height: 9px; }
.ui-app { width: 24px; height: 24px; border-radius: 4px; background: #141318; font: bold 15px/22px "Liberation Sans", sans-serif; text-align: center; color: #7663df; text-decoration: underline; text-decoration-thickness: 1px; text-underline-offset: 2px; }
.tray { margin-left: auto; display: flex; align-items: center; width: 249px; font-size: 12px; background: linear-gradient(#c4c3a0, #c4c3a0) 244px 0 / 1px 40px no-repeat; }
.t-bat { margin-left: 10px; }
.t-wifi { margin-left: 10px; }
.t-vol { margin-left: 6px; }
.lang { margin-left: 10px; width: 24px; letter-spacing: -.5px; }
.clock { display: flex; flex-direction: column; align-items: center; width: 60px; margin-left: 11px; line-height: 19px; letter-spacing: -.4px; white-space: nowrap; }
.notice { position: relative; margin-left: 17px; }
.notice b { position: absolute; left: 7px; top: 6px; width: 17px; height: 17px; border: 1px solid #777; border-radius: 50%; background: #d1cfbd; font-size: 11px; line-height: 15px; font-weight: 400; text-align: center; }
```
